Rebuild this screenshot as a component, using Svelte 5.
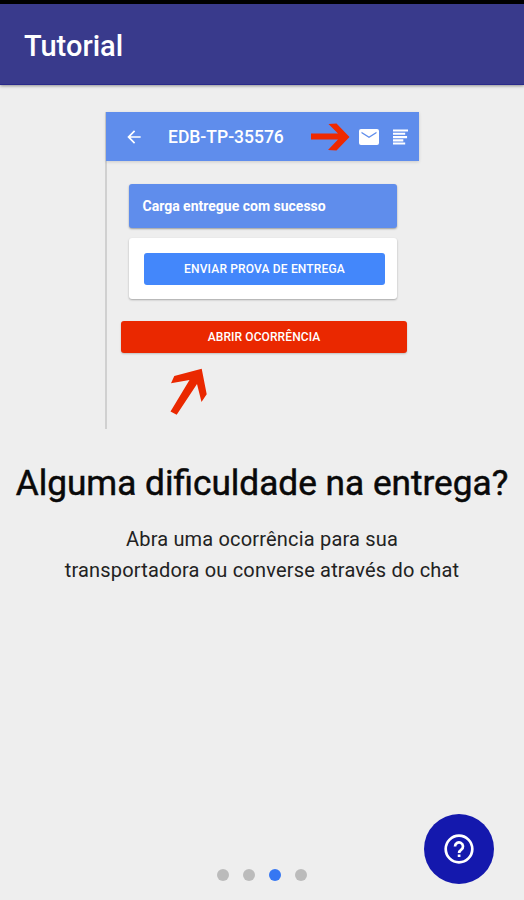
<script>
  const slides = [0, 1, 2, 3];
  let current = $state(2);
</script>

<div class="screen">
  <header><h1>Tutorial</h1></header>

  <main>
    <section class="preview">
      <div class="toolbar">
        <svg class="back" viewBox="0 0 24 24"><path d="M20 11H7.83l5.59-5.59L12 4l-8 8 8 8 1.41-1.41L7.83 13H20z" /></svg>
        <span class="code">EDB-TP-35576</span>
        <svg class="pointer" viewBox="0 0 39 28"><path d="M0 10.500H27L17.500 1 25.500.5 38.500 14 25.500 27.500 17 27 27 16.500H0z" /></svg>
        <svg class="mail" viewBox="2 4 20 16"><path d="M20 4H4a2 2 0 0 0-2 2v12a2 2 0 0 0 2 2h16a2 2 0 0 0 2-2V6a2 2 0 0 0-2-2zm-.5 4.200L12 13 4.500 8.200V6.700L12 11.500l7.500-4.800z" /></svg>
        <svg class="list" viewBox="0 0 16 16"><path d="M0 0h16v2.200H0zM0 3.500h13v2.200H0zM0 7h15v2.200H0zM0 10.500h11v2.200H0zM0 13.800h13V16H0z" /></svg>
      </div>
      <div class="status"><span>Carga entregue com sucesso</span></div>
      <div class="card"><button class="send"><span>ENVIAR PROVA DE ENTREGA</span></button></div>
      <button class="issue"><span>ABRIR OCORRÊNCIA</span></button>
      <svg class="pointer-up" viewBox="0 0 37 47"><path d="M31.700.700 4.300 8 1 15.300 19.500 12 .500 43.500 6.700 46.700 27 16 31.500 34 36.700 26.300z" /></svg>
    </section>

    <h2>Alguma dificuldade na entrega?</h2>
    <p>Abra uma ocorrência para sua<br />transportadora ou converse através do chat</p>
  </main>

  <nav>
    {#each slides as slide}
      <button class="dot" class:active={slide === current} aria-label={`Slide ${slide + 1}`} onclick={() => (current = slide)}></button>
    {/each}
  </nav>
  <button class="help" aria-label="Ajuda">
    <svg viewBox="0 0 30 30"><circle cx="15" cy="15" r="13.300" /><path d="M11 12.400a4 4 0 1 1 6.300 3.300c-1.500 1.100-2.200 1.700-2.200 3.300M15.100 20.500v2.600" /></svg>
  </button>
</div>

<style>
  .screen {
    position: relative;
    box-sizing: border-box;
    width: 524px;
    height: 900px;
    display: flex;
    flex-direction: column;
    overflow: hidden;
    border-top: 4px solid #000;
    background: #eee;
    font-family: Roboto, sans-serif;
  }
  h1, h2, p { margin: 0; white-space: nowrap; }
  button { border: 0; padding: 0; margin: 0; font-family: inherit; }
  svg { display: block; flex: none; }
  header {
    box-sizing: border-box;
    height: 81px;
    flex: none;
    display: flex;
    align-items: center;
    padding: 2px 0 0 24px;
    background: #393a8c;
    box-shadow: inset 0 -1px #29298a, 0 1px 3px rgba(0, 0, 0, .4);
  }
  h1 { color: #fff; font-size: 29px; font-weight: 500; line-height: 34px; }
  main { flex: 1; display: flex; flex-direction: column; align-items: center; padding-top: 27px; }
  .preview {
    box-sizing: border-box;
    width: 314px;
    height: 317px;
    flex: none;
    display: flex;
    flex-direction: column;
    background: linear-gradient(#d0d0d0, #d0d0d0) 0 0 / 2px 100% no-repeat;
  }
  .toolbar {
    height: 49px;
    flex: none;
    display: flex;
    align-items: center;
    margin-left: 1px;
    background: #5f8dec;
    box-shadow: 0 1px 3px rgba(0, 0, 0, .15);
    fill: #fff;
  }
  .back { width: 20px; height: 20px; margin-left: 18px; }
  .code { width: 116px; margin-left: 24px; color: #fff; font-size: 17.500px; font-weight: 500; white-space: nowrap; }
  .pointer { width: 39px; height: 28px; margin-left: 27px; fill: #ee2900; }
  .mail { width: 20px; height: 16px; margin-left: 9px; }
  .list { width: 15px; height: 16px; margin-left: 14px; }
  .status {
    width: 268px;
    height: 44px;
    flex: none;
    display: flex;
    align-items: center;
    margin: 23px 0 0 24px;
    border-radius: 3px;
    background: #5f8dec;
    box-shadow: 0 1px 2px rgba(0, 0, 0, .35);
    color: #fff;
    font-size: 14px;
    font-weight: 700;
    white-space: nowrap;
  }
  .status span { margin-left: 13.500px; }
  .card {
    box-sizing: border-box;
    width: 268px;
    height: 61px;
    flex: none;
    display: flex;
    align-items: center;
    padding-left: 15px;
    margin: 10px 0 0 24px;
    border-radius: 3px;
    background: #fff;
    box-shadow: 0 1px 2px rgba(0, 0, 0, .3);
  }
  .send, .issue {
    height: 32px;
    flex: none;
    color: #fff;
    border-radius: 3px;
    font-size: 12px;
    font-weight: 500;
    line-height: 32px;
    white-space: nowrap;
  }
  .send { width: 241px; background: #4387fb; letter-spacing: .16px; }
  .issue { width: 286px; margin: 22px 0 0 16px; background: #ea2800; letter-spacing: .1px; box-shadow: 0 1px 2px rgba(0, 0, 0, .2); }
  .pointer-up { width: 37px; height: 47px; margin: 15px 0 0 65px; fill: #ea2800; }
  h2 { margin-top: 33px; color: #090909; font-size: 35.200px; font-weight: 400; line-height: 42px; -webkit-text-stroke: .5px #090909; }
  p { margin-top: 20px; text-align: center; color: #222; font-size: 20px; line-height: 31px; letter-spacing: .18px; }
  nav { display: flex; justify-content: center; gap: 14px; padding-bottom: 19px; }
  .dot { width: 12px; height: 12px; border-radius: 50%; background: #bbb; }
  .dot.active { background: #3677f2; }
  .help {
    position: absolute;
    right: 30px;
    bottom: 16px;
    width: 70px;
    height: 70px;
    display: flex;
    align-items: center;
    justify-content: center;
    border-radius: 50%;
    background: #1418ad;
  }
  .help svg { width: 30px; height: 30px; fill: none; stroke: #fff; stroke-width: 2.700px; }
</style>
